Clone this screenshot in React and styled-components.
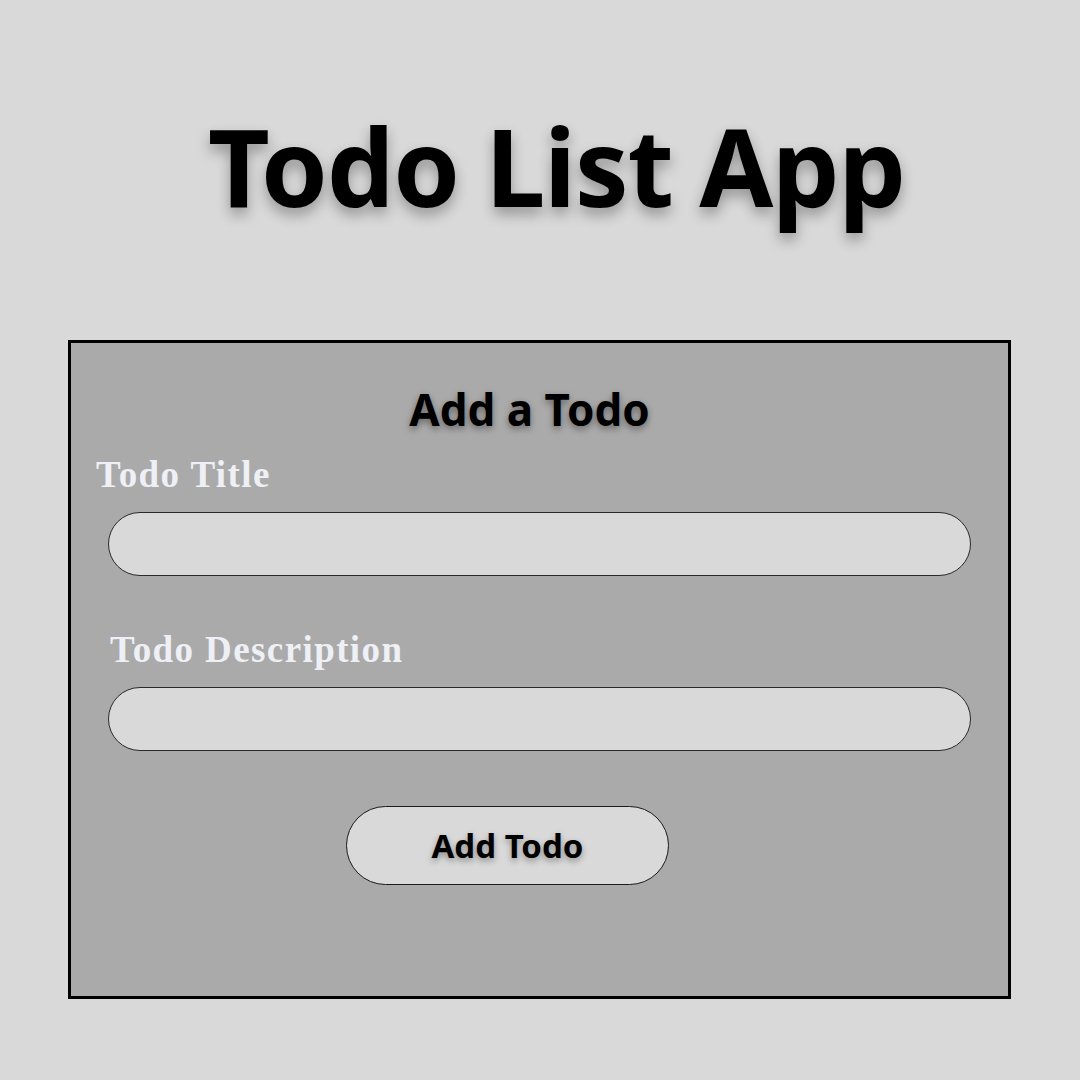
import React, { useState } from 'react';
import styled, { createGlobalStyle } from 'styled-components';

const GlobalStyle = createGlobalStyle`
  * {
    box-sizing: border-box;
  }

  body {
    margin: 0;
    background: #d9d9d9;
    font-family: 'Noto Sans', 'Open Sans', sans-serif;
  }
`;

const Page = styled.div`
  width: 1080px;
  height: 1080px;
  padding: 112px 69px 0 68px;
  display: flex;
  flex-direction: column;
`;

const AppTitle = styled.h1`
  margin: 0 0 121px;
  font-size: 107px;
  line-height: 1;
  font-weight: 700;
  letter-spacing: -1.2px;
  text-align: center;
  color: #000;
  padding-left: 34px;
  text-shadow: 0 7px 14px rgba(0, 0, 0, 0.32);
`;

const Card = styled.form`
  height: 659px;
  border: 3px solid #000;
  background: #aaaaaa;
  padding: 44px 37px 0 25px;
  display: flex;
  flex-direction: column;
`;

const CardHeading = styled.h2`
  margin: 0 0 25px;
  font-size: 44px;
  line-height: 1;
  font-weight: 700;
  text-align: center;
  color: #000;
  padding-right: 8px;
  text-shadow: 0 3px 7px rgba(0, 0, 0, 0.4);
`;

const Label = styled.label`
  display: block;
  margin: ${(p) => p.$top || 0}px 0 19px ${(p) => p.$indent || 0}px;
  font-family: 'Liberation Serif', 'Times New Roman', serif;
  font-size: 37px;
  line-height: 1;
  font-weight: 700;
  letter-spacing: 1.4px;
  color: #eef0f5;
`;

const Input = styled.input`
  display: block;
  width: 863px;
  height: 64px;
  margin-left: 12px;
  border: 1px solid #2a2a2a;
  border-radius: 32px;
  background: #d9d9d9;
  padding: 0 28px;
  font-family: 'Noto Sans', sans-serif;
  font-size: 22px;
  outline: none;
`;

const AddButton = styled.button`
  align-self: flex-start;
  margin: 55px 0 0 250px;
  width: 323px;
  height: 79px;
  border: 1px solid #1a1a1a;
  border-radius: 40px;
  background: #d9d9d9;
  font-family: 'Noto Sans', sans-serif;
  font-size: 33px;
  font-weight: 700;
  color: #000;
  cursor: pointer;
  text-shadow: 0 3px 6px rgba(0, 0, 0, 0.35);
`;

export default function App() {
  const [title, setTitle] = useState('');
  const [desc, setDesc] = useState('');

  return (
    <>
      <GlobalStyle />
      <Page>
        <AppTitle>Todo List App</AppTitle>
        <Card onSubmit={(e) => e.preventDefault()}>
          <CardHeading>Add a Todo</CardHeading>
          <Label htmlFor="title">Todo Title</Label>
          <Input id="title" value={title} onChange={(e) => setTitle(e.target.value)} />
          <Label htmlFor="desc" $top={55} $indent={14}>Todo Description</Label>
          <Input id="desc" value={desc} onChange={(e) => setDesc(e.target.value)} />
          <AddButton type="submit">Add Todo</AddButton>
        </Card>
      </Page>
    </>
  );
}
